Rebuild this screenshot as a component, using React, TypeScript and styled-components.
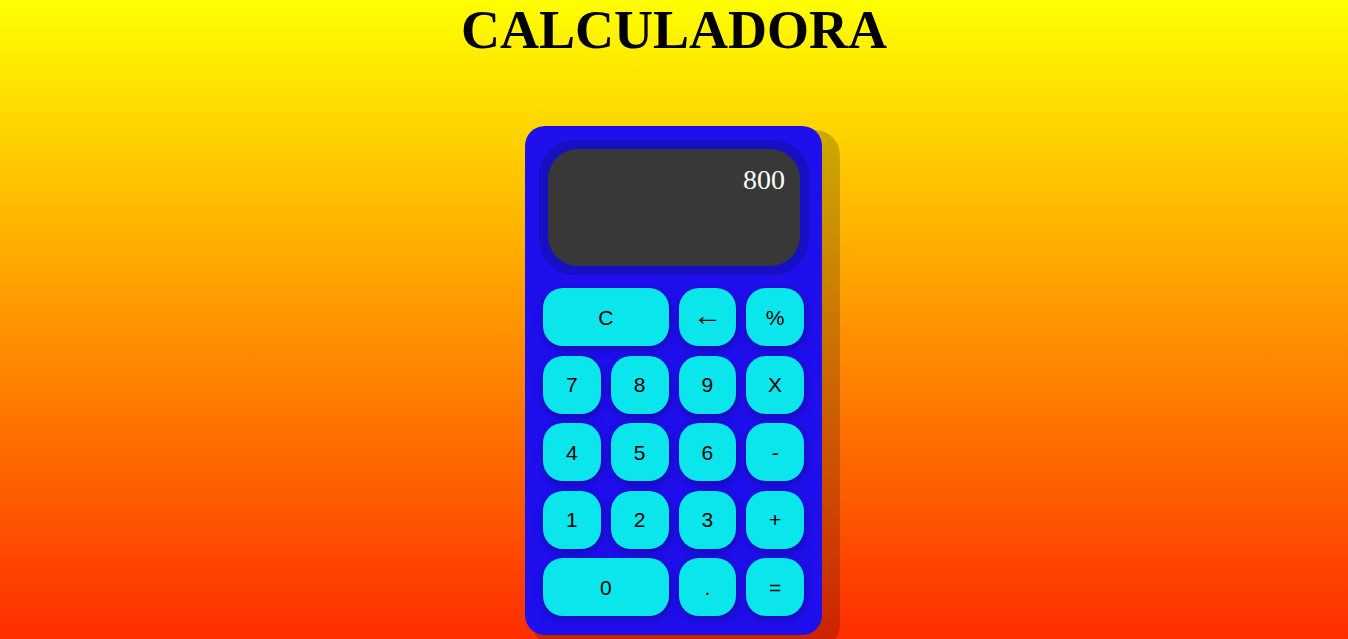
import React from "react";
import styled, { createGlobalStyle } from "styled-components";

const Global = createGlobalStyle`
  html, body {
    margin: 0;
    padding: 0;
  }
  body {
    min-height: 100vh;
    background: linear-gradient(to bottom, #ffff00 0%, #ff2200 105%);
    background-attachment: fixed;
    font-family: "Liberation Serif", "Times New Roman", serif;
    overflow: hidden;
  }
`;

const Page = styled.main`
  display: flex;
  flex-direction: column;
  align-items: center;
  min-height: 100vh;
`;

const Title = styled.h1`
  margin: 0;
  padding-top: 3px;
  font-family: "Liberation Serif", "Times New Roman", serif;
  font-weight: 700;
  font-size: 54px;
  line-height: 1;
  color: #000;
`;

const Body = styled.div`
  margin-top: 69px;
  margin-right: 1px;
  width: 297px;
  box-sizing: border-box;
  padding: 14px 13px 19px 14px;
  background: #1e0fec;
  border-radius: 20px;
  box-shadow: 13px 9px 0 5px rgba(0, 0, 0, 0.2);
`;

const DisplayRing = styled.div`
  padding: 9px;
  background: #1610c4;
  border-radius: 36px;
`;

const Screen = styled.div`
  height: 117px;
  box-sizing: border-box;
  padding: 15px 15px 0 15px;
  background: #383838;
  border-radius: 30px;
  color: #fff;
  font-family: "Liberation Serif", "Times New Roman", serif;
  font-size: 28px;
  text-align: right;
`;

const Keys = styled.div`
  margin: 13px 5px 0 4px;
  display: grid;
  grid-template-columns: repeat(4, 1fr);
  grid-auto-rows: 58px;
  column-gap: 10px;
  row-gap: 9.5px;
`;

const Key = styled.button<{ $wide?: boolean; $serif?: boolean }>`
  grid-column: ${(p) => (p.$wide ? "span 2" : "span 1")};
  border: none;
  border-radius: 20px;
  background: #0ae6ec;
  color: #000;
  font-family: ${(p) =>
    p.$serif
      ? `"Liberation Serif", "Times New Roman", serif`
      : `"Liberation Sans", Arial, sans-serif`};
  font-size: ${(p) => (p.$serif ? "29px" : "21px")};
  line-height: 1;
  padding: ${(p) => (p.$serif ? "0 0 3px" : "0")};
  box-shadow: 1px 3px 8px rgba(0, 0, 60, 0.35);
  cursor: pointer;
`;

const keys: { label: string; wide?: boolean; serif?: boolean }[] = [
  { label: "C", wide: true },
  { label: "←", serif: true },
  { label: "%" },
  { label: "7" },
  { label: "8" },
  { label: "9" },
  { label: "X" },
  { label: "4" },
  { label: "5" },
  { label: "6" },
  { label: "-" },
  { label: "1" },
  { label: "2" },
  { label: "3" },
  { label: "+" },
  { label: "0", wide: true },
  { label: "." },
  { label: "=" },
];

export default function App() {
  return (
    <>
      <Global />
      <Page>
        <Title>CALCULADORA</Title>
        <Body>
          <DisplayRing>
            <Screen>800</Screen>
          </DisplayRing>
          <Keys>
            {keys.map((k, i) => (
              <Key key={i} $wide={k.wide} $serif={k.serif}>
                {k.label}
              </Key>
            ))}
          </Keys>
        </Body>
      </Page>
    </>
  );
}
